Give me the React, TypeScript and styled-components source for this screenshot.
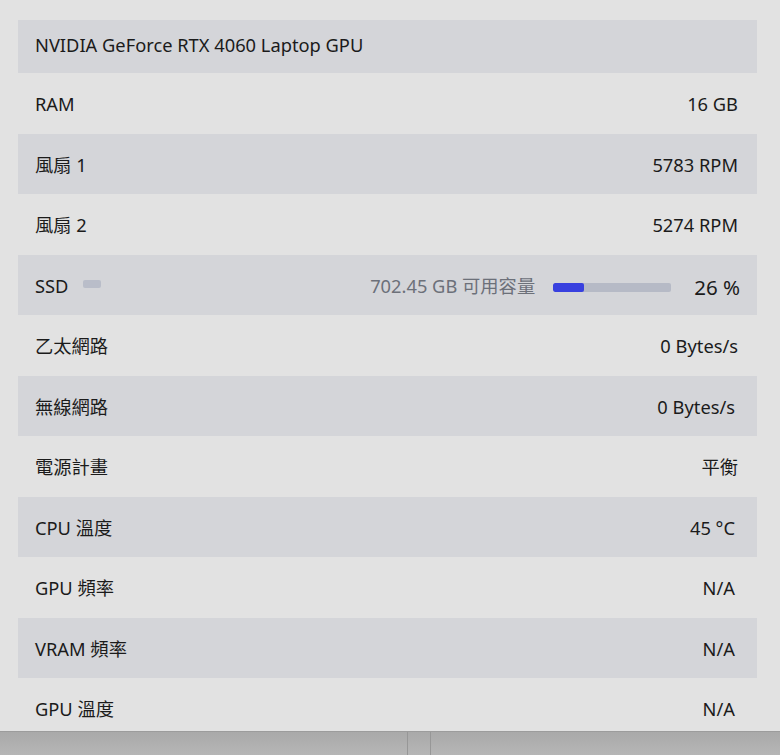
import React from "react";
import styled, { createGlobalStyle } from "styled-components";

const Global = createGlobalStyle`
  html, body { margin: 0; padding: 0; }
  body {
    background: #e2e2e2;
    font-family: "Segoe UI", "Noto Sans", "Noto Sans CJK TC", sans-serif;
    color: #1b1b1b;
  }
`;

const Page = styled.div`
  width: 780px;
  height: 755px;
  display: flex;
  flex-direction: column;
  overflow: hidden;
`;

const Panel = styled.div`
  height: 731px;
  flex: none;
  background: #e2e2e2;
  padding: 20px 23px 0 18px;
  box-sizing: border-box;
  overflow: hidden;
`;

const List = styled.div`
  display: flex;
  flex-direction: column;
`;

const Row = styled.div<{ $shade?: boolean; $head?: boolean }>`
  height: ${(p) => (p.$head ? 53 : 60.5)}px;
  flex: none;
  display: flex;
  align-items: center;
  padding: ${(p) => (p.$head ? "0 19px 3px 17px" : "2px 19px 0 17px")};
  box-sizing: border-box;
  background: ${(p) => (p.$shade ? "#d4d5d9" : "transparent")};
  font-size: 18.3px;
  line-height: 1;
`;

const Label = styled.span`
  flex: none;
`;

const Spacer = styled.span`
  flex: 1;
`;

const Value = styled.span<{ $inset?: number }>`
  flex: none;
  margin-right: ${(p) => p.$inset ?? 0}px;
`;

const Pill = styled.span`
  width: 18px;
  height: 8px;
  border-radius: 2px;
  background: #b9bdc9;
  margin-left: 15px;
  margin-top: -4px;
`;

const Free = styled.span`
  color: #6c7079;
  margin-right: 18px;
`;

const Track = styled.div`
  width: 118px;
  height: 9px;
  border-radius: 2px;
  background: #b6bac6;
  overflow: hidden;
  margin-right: 23px;
  margin-top: 4px;
`;

const Fill = styled.div`
  height: 100%;
  border-radius: 2px;
  background: #3840df;
`;

const Percent = styled.span`
  font-size: 20.5px;
  margin-right: -2px;
  margin-top: 2px;
`;

const BottomBar = styled.div`
  flex: 1;
  display: flex;
  border-top: 1px solid #9c9c9c;
  background: linear-gradient(#a9a9a9, #b6b6b6);
`;

const Pane = styled.div<{ $w?: number }>`
  ${(p) => (p.$w ? `width: ${p.$w}px; flex: none;` : "flex: 1;")}
  border-right: 1px solid #979797;
  &:last-child { border-right: none; }
`;

type Item = { label: string; value: string; inset?: number };

const items: Item[] = [
  { label: "RAM", value: "16 GB" },
  { label: "風扇 1", value: "5783 RPM" },
  { label: "風扇 2", value: "5274 RPM" },
  { label: "SSD", value: "" },
  { label: "乙太網路", value: "0 Bytes/s" },
  { label: "無線網路", value: "0 Bytes/s", inset: 3 },
  { label: "電源計畫", value: "平衡" },
  { label: "CPU 溫度", value: "45 °C", inset: 3 },
  { label: "GPU 頻率", value: "N/A", inset: 3 },
  { label: "VRAM 頻率", value: "N/A", inset: 3 },
  { label: "GPU 溫度", value: "N/A", inset: 3 },
];

export default function App() {
  const used = 26;
  return (
    <Page>
      <Global />
      <Panel>
        <List>
          <Row $shade $head>
            <Label>NVIDIA GeForce RTX 4060 Laptop GPU</Label>
          </Row>
          {items.map((it, i) => (
            <Row key={it.label} $shade={i % 2 === 1}>
              <Label>{it.label}</Label>
              {it.label === "SSD" ? (
                <>
                  <Pill />
                  <Spacer />
                  <Free>702.45 GB 可用容量</Free>
                  <Track>
                    <Fill style={{ width: `${used}%` }} />
                  </Track>
                  <Percent>{used} %</Percent>
                </>
              ) : (
                <>
                  <Spacer />
                  <Value $inset={it.inset}>{it.value}</Value>
                </>
              )}
            </Row>
          ))}
        </List>
      </Panel>
      <BottomBar>
        <Pane $w={407} />
        <Pane $w={22} />
        <Pane />
      </BottomBar>
    </Page>
  );
}
